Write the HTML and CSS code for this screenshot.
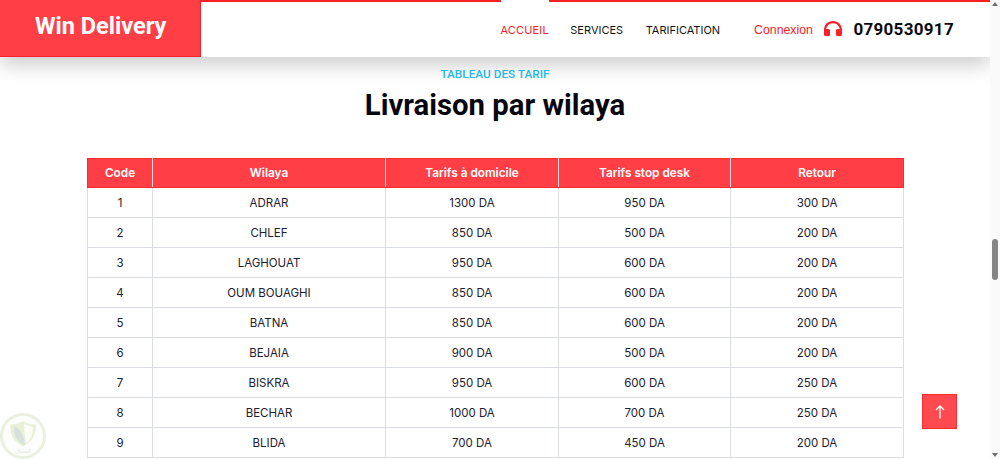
FILE: index.html
```html
<!DOCTYPE html>
<html lang="fr">
<head>
<meta charset="utf-8">
<title>Win Delivery</title>
<link rel="stylesheet" href="styles.css">
</head>
<body>
<div class="page">
  <div class="content">
    <header class="header">
      <a class="logo">Win Delivery</a>
      <div class="navbar">
        <nav class="nav">
          <a class="nav-link active">ACCUEIL</a>
          <a class="nav-link">SERVICES</a>
          <a class="nav-link">TARIFICATION</a>
        </nav>
        <a class="login">Connexion</a>
        <svg class="headset" viewBox="0 0 24 20" width="18" height="15"><path d="M12 0C5 0 0 5.200 0 12v4h3v-4C3 6.800 6.800 3 12 3s9 3.800 9 9v4h3v-4C24 5.200 19 0 12 0z"/><rect x="0" y="10.500" width="8" height="9.500" rx="2"/><rect x="16" y="10.500" width="8" height="9.500" rx="2"/></svg>
        <span class="phone">0790530917</span>
      </div>
    </header>
    <main class="main">
      <p class="eyebrow">TABLEAU DES TARIF</p>
      <h1 class="title">Livraison par wilaya</h1>
      <table class="rates">
        <colgroup><col class="c1"><col class="c2"><col class="c3"><col class="c4"><col class="c5"></colgroup>
        <thead><tr><th>Code</th><th>Wilaya</th><th>Tarifs à domicile</th><th>Tarifs stop desk</th><th>Retour</th></tr></thead>
        <tbody>
          <tr><td>1</td><td>ADRAR</td><td>1300 DA</td><td>950 DA</td><td>300 DA</td></tr>
          <tr><td>2</td><td>CHLEF</td><td>850 DA</td><td>500 DA</td><td>200 DA</td></tr>
          <tr><td>3</td><td>LAGHOUAT</td><td>950 DA</td><td>600 DA</td><td>200 DA</td></tr>
          <tr><td>4</td><td>OUM BOUAGHI</td><td>850 DA</td><td>600 DA</td><td>200 DA</td></tr>
          <tr><td>5</td><td>BATNA</td><td>850 DA</td><td>600 DA</td><td>200 DA</td></tr>
          <tr><td>6</td><td>BEJAIA</td><td>900 DA</td><td>500 DA</td><td>200 DA</td></tr>
          <tr><td>7</td><td>BISKRA</td><td>950 DA</td><td>600 DA</td><td>250 DA</td></tr>
          <tr><td>8</td><td>BECHAR</td><td>1000 DA</td><td>700 DA</td><td>250 DA</td></tr>
          <tr><td>9</td><td>BLIDA</td><td>700 DA</td><td>450 DA</td><td>200 DA</td></tr>
        </tbody>
      </table>
    </main>
  </div>
  <div class="scrollbar">
    <span class="arrow-up"></span>
    <span class="thumb"></span>
    <span class="arrow-down"></span>
  </div>
</div>
<a class="to-top"><svg viewBox="0 0 12 16" width="12" height="16"><path d="M6 14.500V2M2 6l4-4 4 4"/></svg></a>
<svg class="badge" viewBox="0 0 46 46" width="46" height="46">
  <circle cx="23" cy="23" r="21.500" class="badge-ring"/>
  <path class="badge-shield" d="M23 8c4 2.500 8 3.500 13 3.500 0 10-3 17-13 22-10-5-13-12-13-22 5 0 9-1 13-3.500z"/>
  <path class="badge-inner" d="M24 11c3 1.500 6 2.500 9 2.500 0 7-2 13-7 17-1-7-2-13-2-19.500z"/>
  <path class="badge-leaf" d="M14 13c6 3 10 8 11 19-7-3-12-9-11-19z"/>
  <text class="badge-text" x="23" y="40" text-anchor="middle">كسبال</text>
</svg>
</body>
</html>
```
FILE: styles.css
```css
* { box-sizing: border-box; }
html, body { margin: 0; height: 100%; overflow: hidden; background: #fff; }
body { font-family: Roboto, sans-serif; color: #0b0b14; }
.page { display: flex; height: 459px; }
.content { flex: 1; min-width: 0; }
.header {
  display: flex; height: 57px; background: #fff;
  box-shadow: 0 8px 20px rgba(0, 0, 0, .2);
  position: relative;
}
.logo {
  width: 201px; background: #ff3f45;
  border-right: 1px solid #f5222a; border-bottom: 1px solid #f5222a;
  color: #fff; font-weight: 700; font-size: 23.500px;
  padding: 12px 0 0 35px; line-height: 29px;
}
.navbar {
  flex: 1; display: flex; align-items: flex-start;
  border-top: 2px solid #f51f24;
  position: relative;
}
.nav { display: flex; margin-left: 299.500px; margin-top: -2px; }
.nav-link {
  font-family: Inter, sans-serif; font-size: 11px; line-height: 14px;
  padding: 21px 0 0; margin-right: 22.500px; color: #111;
  border-top: 2px solid transparent;
}
.nav-link.active { color: #f5222a; background: #fff; border-top-color: #fff; padding: 21px 0 0; margin-right: 21.500px; letter-spacing: .15px; }
.login { font-family: "Liberation Sans", Arial, sans-serif; font-size: 12.300px; color: #f5222a; margin: 21px 0 0 11.500px; line-height: 15px; }
.headset { fill: #f5222a; margin: 19px 0 0 11px; }
.phone { font-weight: 700; font-size: 17px; line-height: 20px; margin: 17px 0 0 11.500px; letter-spacing: .3px; color: #0b0b14; }
.main { text-align: center; }
.eyebrow { margin: 10px 0 0; font-weight: 500; font-size: 11.800px; line-height: 14px; color: #29c0ee; }
.title { margin: 6px 0 0; font-weight: 700; font-size: 29.300px; line-height: 36px; color: #07070f; }
.rates {
  width: 816px; margin: 35px 0 0 87px; border-collapse: collapse; table-layout: fixed;
  font-family: Inter, sans-serif; font-size: 11.500px;
}
.c1 { width: 65px; } .c2 { width: 233px; } .c3 { width: 173px; } .c4 { width: 172px; } .c5 { width: 173px; }
.rates th {
  height: 29px; padding: 0; background: #ff3f45; color: #fff; font-weight: 600; font-size: 11.800px;
  border: 1px solid #fb2b30; border-left-color: #f3d7d9; border-right-color: #f3d7d9;
}
.rates th:first-child { border-left-color: #fb2b30; }
.rates th:last-child { border-right-color: #fb2b30; }
.rates td {
  height: 30px; padding: 0; color: #1c2030; border: 1px solid #d9dde3; font-weight: 400;
}
.scrollbar { width: 10px; background: #fafafa; position: relative; display: flex; flex-direction: column; align-items: center; }
.thumb { width: 6px; height: 41px; border-radius: 3px; background: #858585; margin-top: 233px; }
.arrow-up, .arrow-down { width: 0; height: 0; border-left: 3px solid transparent; border-right: 3px solid transparent; }
.arrow-up { border-bottom: 4px solid #6f6f6f; margin-top: 2px; }
.arrow-down { border-top: 4px solid #6f6f6f; margin-top: auto; margin-bottom: 2px; }
.to-top {
  position: absolute; left: 922px; top: 394px; width: 35px; height: 35px;
  background: #ff4b50; border: 1px solid #fb2b30;
  display: flex; align-items: center; justify-content: center;
}
.to-top svg { fill: none; stroke: #fff; stroke-width: 1.300; }
.badge { position: absolute; left: 0; top: 413px; }
.badge-ring { fill: #fdfefb; stroke: #eaf0df; stroke-width: 3; }
.badge-shield { fill: #e9f0da; }
.badge-inner { fill: #fbfcf6; }
.badge-leaf { fill: #d6e0dc; }
.badge-text { font-family: "DejaVu Sans", sans-serif; font-size: 6px; fill: #e3e8da; }
```
